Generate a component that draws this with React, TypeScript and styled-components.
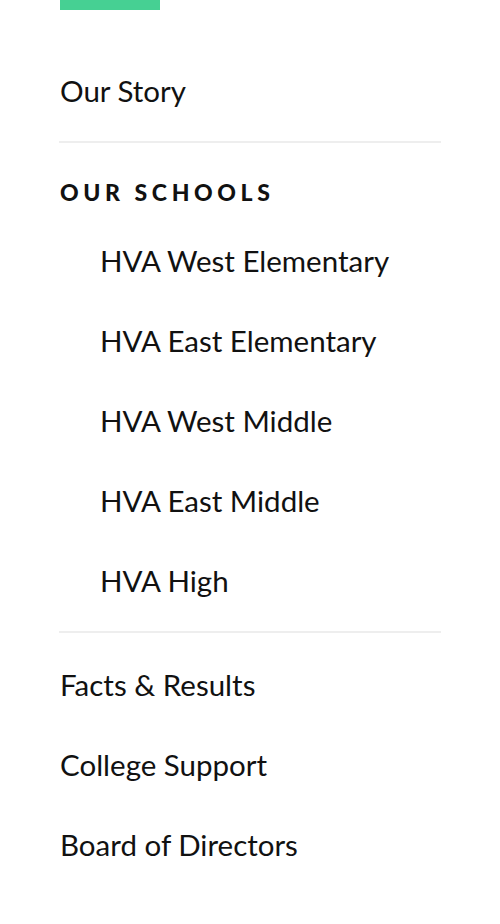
import { createGlobalStyle, styled } from 'styled-components';

const GlobalStyle = createGlobalStyle`
  body {
    margin: 0;
    background: #fff;
    font-family: Lato, "Open Sans", sans-serif;
    color: #111;
  }
`;

const Menu = styled.nav`
  padding: 0 60px;
`;

const AccentBar = styled.div`
  width: 100px;
  height: 10px;
  background-color: #46d093;
  margin-bottom: 40px;
`;

const List = styled.ul`
  list-style: none;
  margin: 0;
  padding: 0;
`;

const Item = styled.li<{ $indent?: boolean }>`
  height: 80px;
  display: flex;
  align-items: center;
  padding-left: ${(p) => (p.$indent ? '40px' : '0')};
  font-size: 29.5px;
`;

const Divider = styled.li`
  height: 2px;
  background-color: #eeeeee;
  margin: 11px -1px;
`;

const SectionTitle = styled.li`
  margin: 37px 0 16px;
  height: 24px;
  line-height: 24px;
  font-size: 23px;
  font-weight: 900;
  letter-spacing: 4.6px;
  text-transform: uppercase;
`;

const schools = [
  'HVA West Elementary',
  'HVA East Elementary',
  'HVA West Middle',
  'HVA East Middle',
  'HVA High',
];

const bottomLinks = ['Facts & Results', 'College Support', 'Board of Directors'];

export default function App() {
  return (
    <>
      <GlobalStyle />
      <Menu>
        <AccentBar />
        <List>
          <Item>Our Story</Item>
          <Divider />
          <SectionTitle>Our Schools</SectionTitle>
          {schools.map((s) => (
            <Item key={s} $indent>
              {s}
            </Item>
          ))}
          <Divider />
          {bottomLinks.map((l) => (
            <Item key={l}>{l}</Item>
          ))}
        </List>
      </Menu>
    </>
  );
}
